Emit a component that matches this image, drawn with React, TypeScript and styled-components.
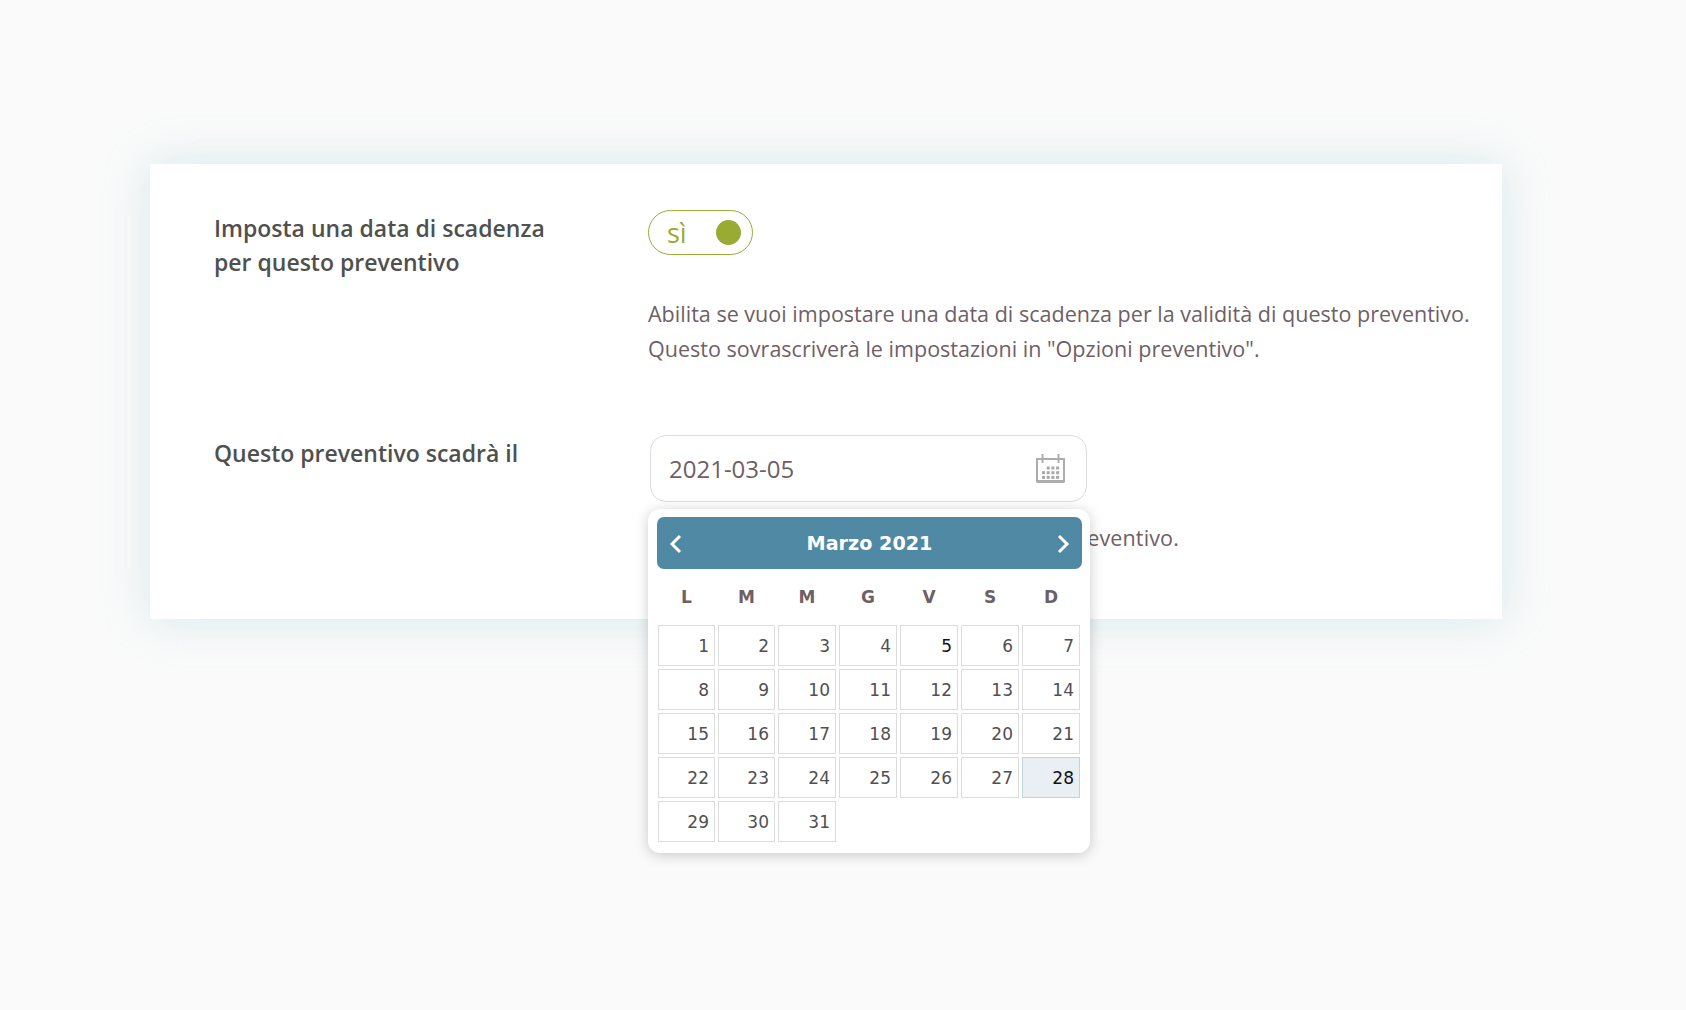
import styled, { createGlobalStyle } from 'styled-components';
import { FunctionComponent } from 'react';

const GlobalStyle = createGlobalStyle`
  html, body {
    margin: 0;
    padding: 0;
    background: #fafafa;
  }
`;

const Page = styled.div`
  width: 1686px;
  height: 1010px;
  overflow: hidden;
  padding: 164px 184px 0 150px;
  box-sizing: border-box;
  font-family: 'Open Sans', 'Noto Sans', sans-serif;
`;

const Card = styled.section`
  height: 455px;
  box-sizing: border-box;
  padding: 46px 0 0 64px;
  background: #fff;
  box-shadow: 0 0 45px rgba(170, 210, 222, 0.42);
`;

const Row = styled.div<{ $height: number }>`
  display: grid;
  grid-template-columns: 434px 1fr;
  height: ${(p) => p.$height}px;
`;

const Label = styled.h3`
  margin: 1px 0 0;
  font-size: 23px;
  line-height: 34px;
  font-weight: 600;
  color: #50504f;
`;

const Toggle = styled.div`
  width: 105px;
  height: 45px;
  box-sizing: border-box;
  display: flex;
  align-items: center;
  justify-content: space-between;
  padding: 0 11px 0 18px;
  border: 1px solid #9aab34;
  border-radius: 23px;
  color: #9aab34;
  font-size: 27px;
  line-height: 40px;
`;

const Knob = styled.span`
  width: 25px;
  height: 25px;
  border-radius: 50%;
  background: #9aab34;
`;

const Description = styled.p`
  margin: 41px 0 0;
  font-size: 21.55px;
  line-height: 35px;
  color: #6f5f66;
  white-space: nowrap;
`;

const Field = styled.div`
  position: relative;
`;

const DateInput = styled.div`
  width: 437px;
  height: 67px;
  margin-left: 2px;
  box-sizing: border-box;
  display: flex;
  align-items: center;
  justify-content: space-between;
  padding: 0 21px 0 18px;
  border: 1px solid #dcdcdc;
  border-radius: 16px;
  background: #fff;
  font-size: 24px;
  color: #6f5f66;
`;

const Hint = styled.p`
  margin: 18px 0 0;
  font-size: 21.55px;
  line-height: 35px;
  letter-spacing: 0.125px;
  color: #6f5f66;
  white-space: nowrap;
`;

const Popup = styled.div`
  position: absolute;
  top: 74px;
  left: 0;
  width: 442px;
  height: 344px;
  box-sizing: border-box;
  padding: 8px 8px 0 9px;
  background: #fff;
  border-radius: 12px;
  box-shadow: 0 2px 14px rgba(0, 0, 0, 0.2);
  font-family: 'DejaVu Sans', Verdana, sans-serif;
`;

const CalendarHeader = styled.div`
  height: 52px;
  display: flex;
  align-items: center;
  justify-content: space-between;
  padding: 0 12px;
  border-radius: 7px;
  background: #5089a3;
  color: #fff;
  font-size: 19.2px;
  font-weight: 700;
`;

const Arrow = styled.svg`
  width: 13px;
  height: 20px;
  margin-top: 2px;
`;

const Weekdays = styled.div`
  display: grid;
  grid-template-columns: 57px 57px repeat(5, 58px);
  column-gap: 3px;
  margin: 17px 0 17px 1px;
`;

const Weekday = styled.span`
  text-align: center;
  font-size: 17px;
  line-height: 22px;
  font-weight: 700;
  color: #6f5f66;
`;

const Days = styled.div`
  display: grid;
  grid-template-columns: 57px 57px repeat(5, 58px);
  grid-auto-rows: 41px;
  gap: 3px;
  margin-left: 1px;
`;

const Day = styled.div<{ $today?: boolean; $selected?: boolean }>`
  box-sizing: border-box;
  padding-right: 5px;
  text-align: right;
  font-size: 17px;
  line-height: 40px;
  border: 1px solid ${(p) => (p.$today ? '#c0d4de' : '#dcdcdc')};
  background: ${(p) => (p.$today ? '#e9eff2' : '#fff')};
  color: ${(p) => (p.$today || p.$selected ? '#111' : '#505050')};
`;

const CalendarIcon: FunctionComponent = () => {
  const dots = [];
  for (let r = 0; r < 3; r++) {
    for (let c = 0; c < 4; c++) {
      if (r === 0 && c === 0) continue;
      dots.push(<rect key={`${r}-${c}`} x={6 + c * 4.7} y={12.5 + r * 4.7} width="3" height="3" fill="#a8a8a8" />);
    }
  }
  return (
    <svg width="29" height="29" viewBox="0 0 29 29" fill="none">
      <path d="M1 5h27v22.5H1z" stroke="#adadad" strokeWidth="2" />
      <path d="M6.5 0v9M22.5 0v9" stroke="#adadad" strokeWidth="2" />
      <path d="M1 27.5h27" stroke="#adadad" strokeWidth="3" />
      {dots}
    </svg>
  );
};

const weekdays = ['L', 'M', 'M', 'G', 'V', 'S', 'D'];
const days = Array.from({ length: 31 }, (_, i) => i + 1);

const App: FunctionComponent = () => {
  return (
    <Page>
      <GlobalStyle />
      <Card>
        <Row $height={225}>
          <Label>
            Imposta una data di scadenza
            <br />
            per questo preventivo
          </Label>
          <div>
            <Toggle>
              sì
              <Knob />
            </Toggle>
            <Description>
              Abilita se vuoi impostare una data di scadenza per la validità di questo preventivo.
              <br />
              Questo sovrascriverà le impostazioni in "Opzioni preventivo".
            </Description>
          </div>
        </Row>
        <Row $height={184}>
          <Label>Questo preventivo scadrà il</Label>
          <Field>
            <DateInput>
              2021-03-05
              <CalendarIcon />
            </DateInput>
            <Hint>Seleziona la data di scadenza per questo preventivo.</Hint>
            <Popup>
              <CalendarHeader>
                <Arrow viewBox="0 0 13 20" fill="none">
                  <path d="M11 2 3 10l8 8" stroke="#fff" strokeWidth="3" />
                </Arrow>
                Marzo 2021
                <Arrow viewBox="0 0 13 20" fill="none">
                  <path d="M2 2l8 8-8 8" stroke="#fff" strokeWidth="3" />
                </Arrow>
              </CalendarHeader>
              <Weekdays>
                {weekdays.map((d, i) => (
                  <Weekday key={i}>{d}</Weekday>
                ))}
              </Weekdays>
              <Days>
                {days.map((d) => (
                  <Day key={d} $selected={d === 5} $today={d === 28}>
                    {d}
                  </Day>
                ))}
              </Days>
            </Popup>
          </Field>
        </Row>
      </Card>
    </Page>
  );
};

export default App;
